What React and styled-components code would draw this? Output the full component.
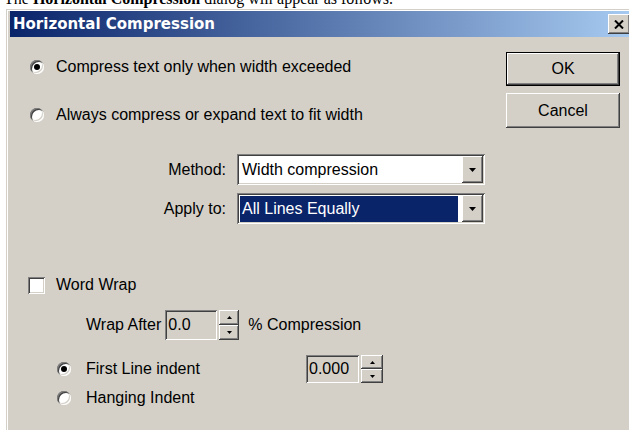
import styled, { createGlobalStyle } from 'styled-components';

const GlobalStyle = createGlobalStyle`
  body {
    margin: 0;
    background: #fff;
    overflow: hidden;
  }
`;

const face = '#d4d0c8';
const raised = `inset -1px -1px 0 #404040, inset 1px 1px 0 #fff, inset -2px -2px 0 #808080, inset 2px 2px 0 ${face}`;
const sunken = `inset 1px 1px 0 #808080, inset -1px -1px 0 #fff, inset 2px 2px 0 #404040, inset -2px -2px 0 ${face}`;

const Intro = styled.p`
    margin: -10px 0 0;
    padding: 0 0 1px 4px;
    font: 16px/18px "Liberation Serif", "Times New Roman", serif;
    white-space: nowrap;
`;

const Window = styled.div`
    box-sizing: border-box;
    width: 630px;
    height: 440px;
    margin-left: 6px;
    padding: 2px 4px 0;
    background: ${face};
    box-shadow: inset 1px 1px 0 ${face}, inset 2px 2px 0 #fff;
    font: 16px "Liberation Sans", Arial, sans-serif;
    color: #000;
`;

const TitleBar = styled.div`
    display: flex;
    align-items: center;
    justify-content: space-between;
    height: 26px;
    padding: 0 2px 0 3px;
    background: linear-gradient(to right, #0a246a, #a6caf0);
`;

const TitleText = styled.span`
    font: bold 15px "DejaVu Sans", Tahoma, sans-serif;
    color: #fff;
`;

const CloseButton = styled.div`
    display: flex;
    align-items: center;
    justify-content: center;
    width: 22px;
    height: 20px;
    background: ${face};
    box-shadow: ${raised};
`;

const Content = styled.div`
    display: flex;
`;

const Options = styled.div`
    flex: 1;
    display: flex;
    flex-direction: column;
    padding-top: 18px;
`;

const OptionRow = styled.div`
    display: flex;
    align-items: center;
    height: ${p => p.$height || 24}px;
    margin-top: ${p => p.$top || 0}px;
    padding-left: ${p => p.$indent || 0}px;
    gap: ${p => p.$gap || 0}px;
    white-space: nowrap;
`;

const Radio = styled.span`
    position: relative;
    flex: none;
    width: 14px;
    height: 14px;
    border-radius: 50%;
    background: #fff;
    box-shadow: ${sunken};

    &::after {
        content: '';
        display: ${p => (p.$checked ? 'block' : 'none')};
        position: absolute;
        left: 4px;
        top: 4px;
        width: 6px;
        height: 6px;
        border-radius: 50%;
        background: #000;
    }
`;

const Check = styled.span`
    flex: none;
    width: 17px;
    height: 17px;
    background: #fff;
    box-shadow: ${sunken};
`;

const FixedLabel = styled.span`
    width: ${p => p.$width}px;
`;

const Spacer = styled.span`
    width: ${p => p.$width}px;
`;

const FieldGrid = styled.div`
    display: grid;
    grid-template-columns: 216px 248px;
    column-gap: 11px;
    row-gap: 8px;
    align-items: center;
    margin-top: 27px;

    label {
        justify-self: end;
    }
`;

const Select = styled.div`
    box-sizing: border-box;
    display: flex;
    align-items: stretch;
    height: 31px;
    padding: 2px 2px 2px 3px;
    background: #fff;
    box-shadow: ${sunken};
`;

const SelectValue = styled.div`
    flex: 1;
    display: flex;
    align-items: center;
    margin: 1px 4px 0 0;
    padding-left: 2px;
    background: ${p => (p.$selected ? '#0a246a' : 'transparent')};
    color: ${p => (p.$selected ? '#fff' : '#000')};
`;

const DropArrow = styled.div`
    display: flex;
    align-items: center;
    justify-content: center;
    width: 21px;
    background: ${face};
    box-shadow: ${raised};
`;

const TextBox = styled.div`
    box-sizing: border-box;
    display: flex;
    align-items: center;
    width: ${p => p.$width}px;
    height: ${p => p.$height}px;
    padding-left: 3px;
    background: ${face};
    box-shadow: ${sunken};
`;

const Spinner = styled.div`
    display: flex;
    flex-direction: column;
    width: ${p => p.$width}px;
    height: ${p => p.$height}px;
    margin-left: 2px;
`;

const SpinHalf = styled.div`
    flex: 1;
    display: flex;
    align-items: center;
    justify-content: center;
    background: ${face};
    box-shadow: ${raised};
`;

const ButtonColumn = styled.div`
    display: flex;
    flex-direction: column;
    gap: 7px;
    width: 114px;
    margin-right: 12px;
    padding-top: 15px;
`;

const PushButton = styled.div`
    display: flex;
    align-items: center;
    justify-content: center;
    height: ${p => (p.$default ? 34 : 35)}px;
    background: ${face};
    box-shadow: ${p => (p.$default ? `inset 0 0 0 1px #000, inset -2px -2px 0 #404040, inset 2px 2px 0 #fff, inset -3px -3px 0 #808080` : raised)};
`;

const Arrow = ({ up, size = 4 }) => (
    <svg width={size * 2 - 1} height={size} viewBox={`0 0 ${size * 2 - 1} ${size}`}>
        <polygon
            points={up ? `0,${size} ${size * 2 - 1},${size} ${size - 0.5},0` : `0,0 ${size * 2 - 1},0 ${size - 0.5},${size}`}
            fill="#000"
        />
    </svg>
);

function SpinBox({ width, height }) {
    return (
        <Spinner $width={width} $height={height}>
            <SpinHalf><Arrow up size={3} /></SpinHalf>
            <SpinHalf><Arrow size={3} /></SpinHalf>
        </Spinner>
    );
}

export default function App() {
    return (
        <>
            <GlobalStyle />
            <Intro>The <b>Horizontal Compression</b> dialog will appear as follows.</Intro>
            <Window>
                <TitleBar>
                    <TitleText>Horizontal Compression</TitleText>
                    <CloseButton>
                        <svg width="10" height="9" viewBox="0 0 10 9">
                            <path d="M1 0.5 L9 8.5 M9 0.5 L1 8.5" stroke="#000" strokeWidth="2" />
                        </svg>
                    </CloseButton>
                </TitleBar>
                <Content>
                    <Options>
                        <OptionRow $indent={20} $gap={12}>
                            <Radio $checked />
                            <span>Compress text only when width exceeded</span>
                        </OptionRow>
                        <OptionRow $indent={20} $gap={12} $top={24}>
                            <Radio />
                            <span>Always compress or expand text to fit width</span>
                        </OptionRow>

                        <FieldGrid>
                            <label>Method:</label>
                            <Select>
                                <SelectValue>Width compression</SelectValue>
                                <DropArrow><Arrow size={4} /></DropArrow>
                            </Select>
                            <label>Apply to:</label>
                            <Select>
                                <SelectValue $selected>All Lines Equally</SelectValue>
                                <DropArrow><Arrow size={4} /></DropArrow>
                            </Select>
                        </FieldGrid>

                        <OptionRow $indent={18} $gap={11} $top={49}>
                            <Check />
                            <span>Word Wrap</span>
                        </OptionRow>
                        <OptionRow $indent={76} $top={13} $height={30}>
                            <span>Wrap After</span>
                            <Spacer $width={4} />
                            <TextBox $width={52} $height={30}>0.0</TextBox>
                            <SpinBox width={20} height={30} />
                            <Spacer $width={9} />
                            <span>% Compression</span>
                        </OptionRow>
                        <OptionRow $indent={47} $top={15} $height={28}>
                            <Radio $checked />
                            <Spacer $width={15} />
                            <FixedLabel $width={220}>First Line indent</FixedLabel>
                            <TextBox $width={53} $height={28}>0.000</TextBox>
                            <SpinBox width={22} height={28} />
                        </OptionRow>
                        <OptionRow $indent={47} $gap={15} $top={3}>
                            <Radio />
                            <span>Hanging Indent</span>
                        </OptionRow>
                    </Options>
                    <ButtonColumn>
                        <PushButton $default>OK</PushButton>
                        <PushButton>Cancel</PushButton>
                    </ButtonColumn>
                </Content>
            </Window>
        </>
    );
}
